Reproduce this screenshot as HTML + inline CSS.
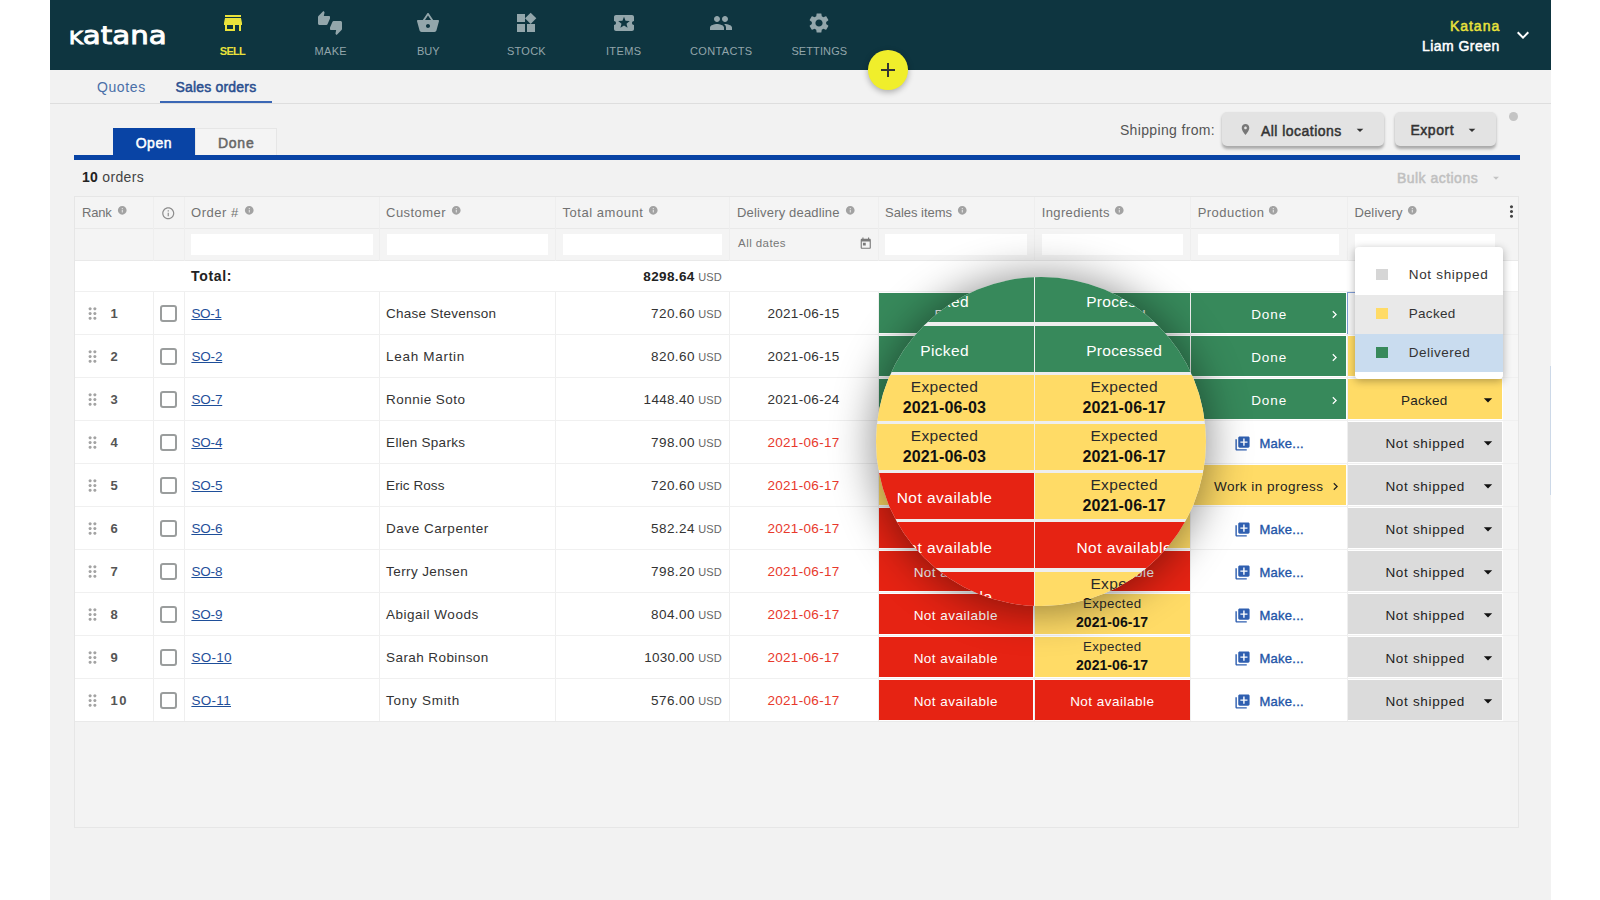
<!DOCTYPE html><html lang="en"><head><meta charset="utf-8"><title>Katana - Sales orders</title><style>
*{box-sizing:border-box;margin:0;padding:0}
html,body{width:1600px;height:900px;overflow:hidden;background:#fff}
body{font-family:"Liberation Sans",sans-serif;font-size:14px;color:#333;position:relative}
.abs,.ic,.t{position:absolute}
.t{white-space:nowrap;line-height:1}
.ic{display:block}
#app{position:absolute;left:50px;top:0;width:1501px;height:900px;background:#f2f2f2;overflow:hidden}
#hdr{position:absolute;left:50px;top:0;width:1501px;height:70px;background:#0e3540}
.hl{position:absolute;background:#e9e9e9}
.fin{position:absolute;top:234px;height:21px;background:#fff}
.row{position:absolute;left:75px;width:1443px;height:43px;background:#fff;border-top:1px solid #f0f0f0}
.cell{position:absolute;top:1px;height:40px}
.g{background:#37895b;color:#fff}
.y{background:#ffdb66;color:#222}
.r{background:#e62313;color:#fff}
.n{background:#dbdbdb;color:#222}
.cb{position:absolute;left:85px;top:13px;width:16.5px;height:16.5px;border:2px solid #9a9d9d;border-radius:3px;background:#fff}
.vl{position:absolute;top:0;width:1px;background:#efefef}
.mc{position:absolute}
#logo::first-letter{font-variant:small-caps;-webkit-text-stroke:1.5px #fff}
</style></head><body>
<div id="app"></div>
<div id="hdr"></div>
<div class="t" id="logo" style="left:69px;top:23px;font-family:'DejaVu Sans',sans-serif;font-weight:400;font-size:25px;color:#fff;letter-spacing:0px;-webkit-text-stroke:.9px #fff;transform-origin:0 0;transform:scaleX(1.17)">katana</div>
<svg class="ic" style="left:221px;top:11px;width:24px;height:24px;" viewBox="0 0 24 24"><path fill="#e9e23b" d="M20 4H4v2h16V4zm1 10v-2l-1-5H4l-1 5v2h1v6h10v-6h4v6h2v-6h1zm-9 4H6v-4h6v4z"/></svg>
<div class="t" style="left:219.8px;top:46.39px;font-size:11px;font-weight:700;color:#e9e23b;letter-spacing:-0.74px;">SELL</div>
<svg class="ic" style="left:318px;top:11px;width:24px;height:24px;" viewBox="0 0 24 24"><path fill="#93a6ab" d="M12 6c0-.55-.45-1-1-1H5.82l.66-3.18.02-.23c0-.31-.13-.59-.33-.8L5.38 0 .44 4.94C.17 5.21 0 5.59 0 6v6.5c0 .83.67 1.5 1.5 1.5h6.75c.62 0 1.15-.38 1.38-.91l2.26-5.29c.07-.17.11-.36.11-.55V6zm10.5 4h-6.75c-.62 0-1.15.38-1.38.91l-2.26 5.29c-.07.17-.11.36-.11.55V18c0 .55.45 1 1 1h5.18l-.66 3.18-.02.24c0 .31.13.59.33.8l.79.78 4.94-4.94c.27-.27.44-.65.44-1.06v-6.5c0-.83-.67-1.5-1.5-1.5z"/></svg>
<div class="t" style="left:314.4px;top:46.39px;font-size:11px;color:#93a6ab;letter-spacing:0.37px;">MAKE</div>
<svg class="ic" style="left:416px;top:11px;width:24px;height:24px;" viewBox="0 0 24 24"><path fill="#93a6ab" d="M17.21 9l-4.38-6.56c-.19-.28-.51-.42-.83-.42-.32 0-.64.14-.83.43L6.79 9H2c-.55 0-1 .45-1 1 0 .09.01.18.04.27l2.54 9.27c.23.84 1 1.46 1.92 1.46h13c.92 0 1.69-.62 1.93-1.46l2.54-9.27L23 10c0-.55-.45-1-1-1h-4.79zM9 9l3-4.4L15 9H9zm3 8c-1.1 0-2-.9-2-2s.9-2 2-2 2 .9 2 2-.9 2-2 2z"/></svg>
<div class="t" style="left:416.9px;top:46.39px;font-size:11px;color:#93a6ab;letter-spacing:0.09px;">BUY</div>
<svg class="ic" style="left:514px;top:11px;width:24px;height:24px;" viewBox="0 0 24 24"><path fill="#93a6ab" d="M13 13v8h8v-8h-8zM3 21h8v-8H3v8zM3 3v8h8V3H3zm13.66-1.31L11 7.34 16.66 13l5.66-5.66-5.66-5.65z"/></svg>
<div class="t" style="left:506.9px;top:46.39px;font-size:11px;color:#93a6ab;letter-spacing:0.28px;">STOCK</div>
<svg class="ic" style="left:612px;top:11px;width:24px;height:24px;" viewBox="0 0 24 24"><path fill="#93a6ab" d="M20 12c0-1.1.9-2 2-2V6c0-1.1-.9-2-2-2H4c-1.1 0-1.99.9-1.99 2v4c1.1 0 1.99.9 1.99 2s-.89 2-2 2v4c0 1.1.9 2 2 2h16c1.1 0 2-.9 2-2v-4c-1.1 0-2-.9-2-2zm-4.42 4.8L12 14.5l-3.58 2.3 1.08-4.12-3.29-2.69 4.24-.25L12 5.8l1.54 3.95 4.24.25-3.29 2.69 1.09 4.11z"/></svg>
<div class="t" style="left:605.9px;top:46.39px;font-size:11px;color:#93a6ab;letter-spacing:0.42px;">ITEMS</div>
<svg class="ic" style="left:709px;top:11px;width:24px;height:24px;" viewBox="0 0 24 24"><path fill="#93a6ab" d="M16 11c1.66 0 2.99-1.34 2.99-3S17.66 5 16 5c-1.66 0-3 1.34-3 3s1.34 3 3 3zm-8 0c1.66 0 2.99-1.34 2.99-3S9.66 5 8 5C6.34 5 5 6.34 5 8s1.34 3 3 3zm0 2c-2.33 0-7 1.17-7 3.5V19h14v-2.5c0-2.33-4.67-3.5-7-3.5zm8 0c-.29 0-.62.02-.97.05 1.16.84 1.97 1.97 1.97 3.45V19h6v-2.5c0-2.33-4.67-3.5-7-3.5z"/></svg>
<div class="t" style="left:689.9px;top:46.39px;font-size:11px;color:#93a6ab;letter-spacing:0.37px;">CONTACTS</div>
<svg class="ic" style="left:807px;top:11px;width:24px;height:24px;" viewBox="0 0 24 24"><path fill="#93a6ab" d="M19.14 12.94c.04-.3.06-.61.06-.94 0-.32-.02-.64-.07-.94l2.03-1.58c.18-.14.23-.41.12-.61l-1.92-3.32c-.12-.22-.37-.29-.59-.22l-2.39.96c-.5-.38-1.03-.7-1.62-.94l-.36-2.54c-.04-.24-.24-.41-.48-.41h-3.84c-.24 0-.43.17-.47.41l-.36 2.54c-.59.24-1.13.57-1.62.94l-2.39-.96c-.22-.08-.47 0-.59.22L2.74 8.87c-.12.21-.08.47.12.61l2.03 1.58c-.05.3-.09.63-.09.94s.02.64.07.94l-2.03 1.58c-.18.14-.23.41-.12.61l1.92 3.32c.12.22.37.29.59.22l2.39-.96c.5.38 1.03.7 1.62.94l.36 2.54c.05.24.24.41.48.41h3.84c.24 0 .44-.17.47-.41l.36-2.54c.59-.24 1.13-.56 1.62-.94l2.39.96c.22.08.47 0 .59-.22l1.92-3.32c.12-.22.07-.47-.12-.61l-2.01-1.58zM12 15.6c-1.98 0-3.6-1.62-3.6-3.6s1.62-3.6 3.6-3.6 3.6 1.62 3.6 3.6-1.62 3.6-3.6 3.6z"/></svg>
<div class="t" style="left:791.4px;top:46.39px;font-size:11px;color:#93a6ab;letter-spacing:0.11px;">SETTINGS</div>
<div class="t" style="left:1449.9px;top:19.15px;font-size:14px;color:#e9e23b;letter-spacing:0.99px;-webkit-text-stroke:.5px #e9e23b;">Katana</div>
<div class="t" style="left:1421.9px;top:39.45px;font-size:14px;color:#fff;letter-spacing:0.46px;-webkit-text-stroke:.5px #fff;">Liam Green</div>
<svg class="ic" style="left:1511.2px;top:23.3px;width:24px;height:24px;" viewBox="0 0 24 24"><path fill="#fff" d="M16.590 8.590L12 13.170 7.410 8.590 6 10l6 6 6-6z"/></svg>
<div class="abs" style="left:868px;top:50px;width:39.5px;height:39.5px;border-radius:50%;background:#f0ee2b;box-shadow:0 2px 6px rgba(0,0,0,.3)"></div>
<div class="abs" style="left:881px;top:69.2px;width:13.5px;height:1.7px;background:#333"></div><div class="abs" style="left:886.9px;top:63.3px;width:1.7px;height:13.5px;background:#333"></div>
<div class="hl" style="left:50px;top:103px;width:1501px;height:1px;background:#dedede"></div>
<div class="t" style="left:96.9px;top:79.65px;font-size:14px;color:#4a6fa8;letter-spacing:0.63px;">Quotes</div>
<div class="t" style="left:175.4px;top:79.65px;font-size:14px;color:#2a4f8f;letter-spacing:0.2px;-webkit-text-stroke:.5px #2a4f8f;">Sales orders</div>
<div class="abs" style="left:160px;top:101px;width:112px;height:2px;background:#3b67b5"></div>
<div class="abs" style="left:195px;top:128px;width:82px;height:28px;background:#f4f4f4;border:1px solid #e6e6e6;border-bottom:0"></div>
<div class="abs" style="left:113px;top:128px;width:82px;height:28px;background:#0944a5"></div>
<div class="t" style="left:135.7px;top:136.05px;font-size:14px;color:#fff;letter-spacing:0.52px;-webkit-text-stroke:.5px #fff;">Open</div>
<div class="t" style="left:217.9px;top:136.05px;font-size:14px;color:#666;letter-spacing:0.78px;-webkit-text-stroke:.5px #666;">Done</div>
<div class="abs" style="left:74px;top:154.5px;width:1446px;height:5px;background:#0944a5"></div>
<div class="t" style="left:1119.9px;top:123.35px;font-size:14px;color:#555;letter-spacing:0.35px;">Shipping from:</div>
<div class="abs" style="left:1222px;top:112px;width:162px;height:34px;background:#e3e3e3;border-radius:5px;box-shadow:0 2.5px 3px rgba(0,0,0,.3)"></div>
<svg class="ic" style="left:1239px;top:123px;width:13px;height:13px;" viewBox="0 0 24 24"><path fill="#777" d="M12 2C8.130 2 5 5.130 5 9c0 5.250 7 13 7 13s7-7.750 7-13c0-3.870-3.130-7-7-7zm0 9.500c-1.380 0-2.500-1.120-2.500-2.500s1.120-2.500 2.500-2.500 2.500 1.120 2.500 2.500-1.120 2.500-2.500 2.500z"/></svg>
<div class="t" style="left:1260.9px;top:123.65px;font-size:14px;color:#333;letter-spacing:0.47px;-webkit-text-stroke:.5px #333;">All locations</div>
<svg class="ic" style="left:1352px;top:122px;width:16px;height:16px;" viewBox="0 0 24 24"><path fill="#333" d="M7 10l5 5 5-5z"/></svg>
<div class="abs" style="left:1395px;top:112px;width:101px;height:34px;background:#e3e3e3;border-radius:5px;box-shadow:0 2.5px 3px rgba(0,0,0,.3)"></div>
<div class="t" style="left:1410.4px;top:122.95px;font-size:14px;color:#333;letter-spacing:0.57px;-webkit-text-stroke:.5px #333;">Export</div>
<svg class="ic" style="left:1464px;top:122px;width:16px;height:16px;" viewBox="0 0 24 24"><path fill="#333" d="M7 10l5 5 5-5z"/></svg>
<div class="abs" style="left:1509px;top:112px;width:9px;height:9px;border-radius:50%;background:#c4c4c4"></div>
<div class="t" style="left:81.9px;top:170.15px;font-size:14px;color:#444;letter-spacing:0.33px;"><b style="color:#222">10</b> orders</div>
<div class="t" style="left:1396.9px;top:170.65px;font-size:14px;color:#c0c0c0;letter-spacing:0.48px;-webkit-text-stroke:.5px #c0c0c0;">Bulk actions</div>
<svg class="ic" style="left:1489px;top:171px;width:14px;height:14px;" viewBox="0 0 24 24"><path fill="#c4c4c4" d="M7 10l5 5 5-5z"/></svg>
<div class="abs" style="left:74px;top:196px;width:1445px;height:632px;border:1px solid #e6e6e6;background:#f3f3f3"></div>
<div class="abs" style="left:75px;top:197px;width:1443px;height:64px;background:#f4f4f4"></div>
<div class="hl" style="left:75px;top:228px;width:1443px;height:1px"></div>
<div class="hl" style="left:75px;top:260px;width:1443px;height:1px"></div>
<div class="vl" style="left:153px;top:197px;height:64px;background:#eeeeee"></div>
<div class="vl" style="left:184px;top:197px;height:64px;background:#eeeeee"></div>
<div class="vl" style="left:379px;top:197px;height:64px;background:#eeeeee"></div>
<div class="vl" style="left:555px;top:197px;height:64px;background:#eeeeee"></div>
<div class="vl" style="left:729px;top:197px;height:64px;background:#eeeeee"></div>
<div class="vl" style="left:878px;top:197px;height:64px;background:#eeeeee"></div>
<div class="vl" style="left:1034px;top:197px;height:64px;background:#eeeeee"></div>
<div class="vl" style="left:1190px;top:197px;height:64px;background:#eeeeee"></div>
<div class="vl" style="left:1347px;top:197px;height:64px;background:#eeeeee"></div>
<div class="t" style="left:82px;top:206px;font-size:13px;color:#727272;letter-spacing:-0.18px;">Rank</div>
<svg class="ic" style="left:117.0px;top:204.5px;width:10.5px;height:10.5px;" viewBox="0 0 24 24"><path fill="#a2a2a2" d="M12 2C6.48 2 2 6.48 2 12s4.480 10 10 10 10-4.480 10-10S17.520 2 12 2zm1 15h-2v-6h2v6zm0-8h-2V7h2v2z"/></svg>
<div class="t" style="left:191.1px;top:206px;font-size:13px;color:#727272;letter-spacing:0.5px;">Order #</div>
<svg class="ic" style="left:243.5px;top:204.5px;width:10.5px;height:10.5px;" viewBox="0 0 24 24"><path fill="#a2a2a2" d="M12 2C6.48 2 2 6.48 2 12s4.480 10 10 10 10-4.480 10-10S17.520 2 12 2zm1 15h-2v-6h2v6zm0-8h-2V7h2v2z"/></svg>
<div class="t" style="left:386.1px;top:206px;font-size:13px;color:#727272;letter-spacing:0.44px;">Customer</div>
<svg class="ic" style="left:450.5px;top:204.5px;width:10.5px;height:10.5px;" viewBox="0 0 24 24"><path fill="#a2a2a2" d="M12 2C6.48 2 2 6.48 2 12s4.480 10 10 10 10-4.480 10-10S17.520 2 12 2zm1 15h-2v-6h2v6zm0-8h-2V7h2v2z"/></svg>
<div class="t" style="left:562.4px;top:206px;font-size:13px;color:#727272;letter-spacing:0.55px;">Total amount</div>
<svg class="ic" style="left:647.5px;top:204.5px;width:10.5px;height:10.5px;" viewBox="0 0 24 24"><path fill="#a2a2a2" d="M12 2C6.48 2 2 6.48 2 12s4.480 10 10 10 10-4.480 10-10S17.520 2 12 2zm1 15h-2v-6h2v6zm0-8h-2V7h2v2z"/></svg>
<div class="t" style="left:737px;top:206px;font-size:13px;color:#727272;letter-spacing:0.17px;">Delivery deadline</div>
<svg class="ic" style="left:844.5px;top:204.5px;width:10.5px;height:10.5px;" viewBox="0 0 24 24"><path fill="#a2a2a2" d="M12 2C6.48 2 2 6.48 2 12s4.480 10 10 10 10-4.480 10-10S17.520 2 12 2zm1 15h-2v-6h2v6zm0-8h-2V7h2v2z"/></svg>
<div class="t" style="left:885.1px;top:206px;font-size:13px;color:#727272;letter-spacing:-0.03px;">Sales items</div>
<svg class="ic" style="left:956.5px;top:204.5px;width:10.5px;height:10.5px;" viewBox="0 0 24 24"><path fill="#a2a2a2" d="M12 2C6.48 2 2 6.48 2 12s4.480 10 10 10 10-4.480 10-10S17.520 2 12 2zm1 15h-2v-6h2v6zm0-8h-2V7h2v2z"/></svg>
<div class="t" style="left:1041.8px;top:206px;font-size:13px;color:#727272;letter-spacing:0.34px;">Ingredients</div>
<svg class="ic" style="left:1113.9px;top:204.5px;width:10.5px;height:10.5px;" viewBox="0 0 24 24"><path fill="#a2a2a2" d="M12 2C6.48 2 2 6.48 2 12s4.480 10 10 10 10-4.480 10-10S17.520 2 12 2zm1 15h-2v-6h2v6zm0-8h-2V7h2v2z"/></svg>
<div class="t" style="left:1197.7px;top:206px;font-size:13px;color:#727272;letter-spacing:0.46px;">Production</div>
<svg class="ic" style="left:1268.3px;top:204.5px;width:10.5px;height:10.5px;" viewBox="0 0 24 24"><path fill="#a2a2a2" d="M12 2C6.48 2 2 6.48 2 12s4.480 10 10 10 10-4.480 10-10S17.520 2 12 2zm1 15h-2v-6h2v6zm0-8h-2V7h2v2z"/></svg>
<div class="t" style="left:1354.4px;top:206px;font-size:13px;color:#727272;letter-spacing:0.18px;">Delivery</div>
<svg class="ic" style="left:1407.1px;top:204.5px;width:10.5px;height:10.5px;" viewBox="0 0 24 24"><path fill="#a2a2a2" d="M12 2C6.48 2 2 6.48 2 12s4.480 10 10 10 10-4.480 10-10S17.520 2 12 2zm1 15h-2v-6h2v6zm0-8h-2V7h2v2z"/></svg>
<svg class="ic" style="left:161px;top:205.5px;width:14.5px;height:14.5px;" viewBox="0 0 24 24"><path fill="#8c8c8c" d="M11 7h2v2h-2zm0 4h2v6h-2zm1-9C6.48 2 2 6.48 2 12s4.480 10 10 10 10-4.480 10-10S17.520 2 12 2zm0 18c-4.410 0-8-3.590-8-8s3.590-8 8-8 8 3.590 8 8-3.590 8-8 8z"/></svg>
<svg class="ic" style="left:1501.5px;top:202px;width:19px;height:19px;" viewBox="0 0 24 24"><path fill="#444" d="M12 8c1.100 0 2-.9 2-2s-.9-2-2-2-2 .9-2 2 .9 2 2 2zm0 2c-1.100 0-2 .9-2 2s.9 2 2 2 2-.9 2-2-.9-2-2-2zm0 6c-1.100 0-2 .9-2 2s.9 2 2 2 2-.9 2-2-.9-2-2-2z"/></svg>
<div class="fin" style="left:191px;width:182px"></div>
<div class="fin" style="left:387px;width:161px"></div>
<div class="fin" style="left:563px;width:159px"></div>
<div class="fin" style="left:885px;width:142px"></div>
<div class="fin" style="left:1042px;width:141px"></div>
<div class="fin" style="left:1198px;width:141px"></div>
<div class="fin" style="left:1355px;width:140px"></div>
<div class="t" style="left:738.1px;top:237.67px;font-size:11.5px;color:#777;letter-spacing:0.42px;">All dates</div>
<svg class="ic" style="left:859px;top:236.5px;width:13.5px;height:13.5px;" viewBox="0 0 24 24"><path fill="#7a7a7a" d="M19 3h-1V1h-2v2H8V1H6v2H5c-1.110 0-1.990.9-1.990 2L3 19c0 1.100.890 2 2 2h14c1.100 0 2-.9 2-2V5c0-1.100-.9-2-2-2zm0 16H5V8h14v11zM7 10h5v5H7z"/></svg>
<div class="abs" style="left:75px;top:261px;width:1443px;height:30px;background:#fff"></div>
<div class="t" style="left:191.1px;top:269.15px;font-size:14px;font-weight:700;color:#222;letter-spacing:0.65px;">Total:</div>
<div class="t" style="left:643.3px;top:269.57px;font-size:13.5px;font-weight:700;color:#222;letter-spacing:0.38px;">8298.64</div>
<div class="t" style="left:698.2px;top:271.69px;font-size:11px;color:#666;letter-spacing:0.19px;">USD</div>
<div class="row" style="top:291px">
<div class="vl" style="left:78px;height:42px"></div>
<div class="vl" style="left:109px;height:42px"></div>
<div class="vl" style="left:304px;height:42px"></div>
<div class="vl" style="left:480px;height:42px"></div>
<div class="vl" style="left:654px;height:42px"></div>
<div class="vl" style="left:803px;height:42px"></div>
<div class="vl" style="left:959px;height:42px"></div>
<div class="vl" style="left:1115px;height:42px"></div>
<div class="vl" style="left:1272px;height:42px"></div>
<div class="abs" style="left:1428px;top:0;width:15px;height:42px;background:#f6f6f6"></div>
<svg class="ic" style="left:8px;top:11.5px;width:19px;height:19px;" viewBox="0 0 24 24"><path fill="#a3a3a3" d="M11 18c0 1.100-.9 2-2 2s-2-.9-2-2 .9-2 2-2 2 .9 2 2zm-2-8c-1.100 0-2 .9-2 2s.9 2 2 2 2-.9 2-2-.9-2-2-2zm0-6c-1.100 0-2 .9-2 2s.9 2 2 2 2-.9 2-2-.9-2-2-2zm6 4c1.100 0 2-.9 2-2s-.9-2-2-2-2 .9-2 2 .9 2 2 2zm0 2c-1.100 0-2 .9-2 2s.9 2 2 2 2-.9 2-2-.9-2-2-2zm0 6c-1.100 0-2 .9-2 2s.9 2 2 2 2-.9 2-2-.9-2-2-2z"/></svg>
<div class="t" style="left:35.4px;top:15.4px;font-size:13px;font-weight:700;color:#555;letter-spacing:-1.13px;">1</div>
<div class="cb"></div>
<div class="t" style="left:116.4px;top:14.97px;font-size:13.5px;color:#1f4f9a;letter-spacing:-0.34px;text-decoration:underline">SO-1</div>
<div class="t" style="left:311.1px;top:14.97px;font-size:13.5px;color:#333;letter-spacing:0.24px;">Chase Stevenson</div>
<div class="t" style="left:576.1px;top:14.97px;font-size:13.5px;color:#333;letter-spacing:0.4px;">720.60</div>
<div class="t" style="left:623.2px;top:17.09px;font-size:11px;color:#666;letter-spacing:0.19px;">USD</div>
<div class="t" style="left:692.4px;top:14.97px;font-size:13.5px;color:#333;letter-spacing:0.32px;">2021-06-15</div>
<div class="cell g" style="left:804px;width:154px"></div><div class="t" style="left:859.4px;top:15.57px;font-size:13.5px;color:#fff;letter-spacing:0.36px;">Picked</div>
<div class="cell g" style="left:960px;width:155px"></div><div class="t" style="left:1003.65px;top:15.57px;font-size:13.5px;color:#fff;letter-spacing:0.38px;">Processed</div>
<div class="cell g" style="left:1116px;width:155px"></div>
<div class="t" style="left:1176.2px;top:15.57px;font-size:13.5px;color:#fff;letter-spacing:0.91px;">Done</div>
<svg class="ic" style="left:1252px;top:14.5px;width:15px;height:15px;" viewBox="0 0 24 24"><path fill="#fff" d="M10 6L8.590 7.410 13.170 12l-4.580 4.590L10 18l6-6z"/></svg>
<div class="cell" style="left:1272px;top:0;height:43px;width:156px;border:1.5px solid #7f9cd6;background:#f6f6f6"></div>
</div>
<div class="row" style="top:334px">
<div class="vl" style="left:78px;height:42px"></div>
<div class="vl" style="left:109px;height:42px"></div>
<div class="vl" style="left:304px;height:42px"></div>
<div class="vl" style="left:480px;height:42px"></div>
<div class="vl" style="left:654px;height:42px"></div>
<div class="vl" style="left:803px;height:42px"></div>
<div class="vl" style="left:959px;height:42px"></div>
<div class="vl" style="left:1115px;height:42px"></div>
<div class="vl" style="left:1272px;height:42px"></div>
<div class="abs" style="left:1428px;top:0;width:15px;height:42px;background:#f6f6f6"></div>
<svg class="ic" style="left:8px;top:11.5px;width:19px;height:19px;" viewBox="0 0 24 24"><path fill="#a3a3a3" d="M11 18c0 1.100-.9 2-2 2s-2-.9-2-2 .9-2 2-2 2 .9 2 2zm-2-8c-1.100 0-2 .9-2 2s.9 2 2 2 2-.9 2-2-.9-2-2-2zm0-6c-1.100 0-2 .9-2 2s.9 2 2 2 2-.9 2-2-.9-2-2-2zm6 4c1.100 0 2-.9 2-2s-.9-2-2-2-2 .9-2 2 .9 2 2 2zm0 2c-1.100 0-2 .9-2 2s.9 2 2 2 2-.9 2-2-.9-2-2-2zm0 6c-1.100 0-2 .9-2 2s.9 2 2 2 2-.9 2-2-.9-2-2-2z"/></svg>
<div class="t" style="left:35.4px;top:15.4px;font-size:13px;font-weight:700;color:#555;letter-spacing:-1.13px;">2</div>
<div class="cb"></div>
<div class="t" style="left:116.4px;top:14.97px;font-size:13.5px;color:#1f4f9a;letter-spacing:-0.17px;text-decoration:underline">SO-2</div>
<div class="t" style="left:311.1px;top:14.97px;font-size:13.5px;color:#333;letter-spacing:0.69px;">Leah Martin</div>
<div class="t" style="left:576.1px;top:14.97px;font-size:13.5px;color:#333;letter-spacing:0.4px;">820.60</div>
<div class="t" style="left:623.2px;top:17.09px;font-size:11px;color:#666;letter-spacing:0.19px;">USD</div>
<div class="t" style="left:692.4px;top:14.97px;font-size:13.5px;color:#333;letter-spacing:0.32px;">2021-06-15</div>
<div class="cell g" style="left:804px;width:154px"></div><div class="t" style="left:859.4px;top:15.57px;font-size:13.5px;color:#fff;letter-spacing:0.36px;">Picked</div>
<div class="cell g" style="left:960px;width:155px"></div><div class="t" style="left:1003.65px;top:15.57px;font-size:13.5px;color:#fff;letter-spacing:0.38px;">Processed</div>
<div class="cell g" style="left:1116px;width:155px"></div>
<div class="t" style="left:1176.2px;top:15.57px;font-size:13.5px;color:#fff;letter-spacing:0.91px;">Done</div>
<svg class="ic" style="left:1252px;top:14.5px;width:15px;height:15px;" viewBox="0 0 24 24"><path fill="#fff" d="M10 6L8.590 7.410 13.170 12l-4.580 4.590L10 18l6-6z"/></svg>
<div class="cell y" style="left:1273px;width:154px"></div>
</div>
<div class="row" style="top:377px">
<div class="vl" style="left:78px;height:42px"></div>
<div class="vl" style="left:109px;height:42px"></div>
<div class="vl" style="left:304px;height:42px"></div>
<div class="vl" style="left:480px;height:42px"></div>
<div class="vl" style="left:654px;height:42px"></div>
<div class="vl" style="left:803px;height:42px"></div>
<div class="vl" style="left:959px;height:42px"></div>
<div class="vl" style="left:1115px;height:42px"></div>
<div class="vl" style="left:1272px;height:42px"></div>
<div class="abs" style="left:1428px;top:0;width:15px;height:42px;background:#f6f6f6"></div>
<svg class="ic" style="left:8px;top:11.5px;width:19px;height:19px;" viewBox="0 0 24 24"><path fill="#a3a3a3" d="M11 18c0 1.100-.9 2-2 2s-2-.9-2-2 .9-2 2-2 2 .9 2 2zm-2-8c-1.100 0-2 .9-2 2s.9 2 2 2 2-.9 2-2-.9-2-2-2zm0-6c-1.100 0-2 .9-2 2s.9 2 2 2 2-.9 2-2-.9-2-2-2zm6 4c1.100 0 2-.9 2-2s-.9-2-2-2-2 .9-2 2 .9 2 2 2zm0 2c-1.100 0-2 .9-2 2s.9 2 2 2 2-.9 2-2-.9-2-2-2zm0 6c-1.100 0-2 .9-2 2s.9 2 2 2 2-.9 2-2-.9-2-2-2z"/></svg>
<div class="t" style="left:35.4px;top:15.4px;font-size:13px;font-weight:700;color:#555;letter-spacing:-1.13px;">3</div>
<div class="cb"></div>
<div class="t" style="left:116.4px;top:14.97px;font-size:13.5px;color:#1f4f9a;letter-spacing:-0.17px;text-decoration:underline">SO-7</div>
<div class="t" style="left:311.1px;top:14.97px;font-size:13.5px;color:#333;letter-spacing:0.46px;">Ronnie Soto</div>
<div class="t" style="left:568.6px;top:14.97px;font-size:13.5px;color:#333;letter-spacing:0.33px;">1448.40</div>
<div class="t" style="left:623.2px;top:17.09px;font-size:11px;color:#666;letter-spacing:0.19px;">USD</div>
<div class="t" style="left:692.4px;top:14.97px;font-size:13.5px;color:#333;letter-spacing:0.32px;">2021-06-24</div>
<div class="cell g" style="left:804px;width:154px"></div><div class="t" style="left:859.4px;top:15.57px;font-size:13.5px;color:#fff;letter-spacing:0.36px;">Picked</div>
<div class="cell g" style="left:960px;width:155px"></div><div class="t" style="left:1003.65px;top:15.57px;font-size:13.5px;color:#fff;letter-spacing:0.38px;">Processed</div>
<div class="cell g" style="left:1116px;width:155px"></div>
<div class="t" style="left:1176.2px;top:15.57px;font-size:13.5px;color:#fff;letter-spacing:0.91px;">Done</div>
<svg class="ic" style="left:1252px;top:14.5px;width:15px;height:15px;" viewBox="0 0 24 24"><path fill="#fff" d="M10 6L8.590 7.410 13.170 12l-4.580 4.590L10 18l6-6z"/></svg>
<div class="cell y" style="left:1273px;width:154px"></div>
<div class="t" style="left:1326.1px;top:15.57px;font-size:13.5px;color:#222;letter-spacing:0.25px;">Packed</div>
<svg class="ic" style="left:1403px;top:11.8px;width:20px;height:20px;" viewBox="0 0 24 24"><path fill="#111" d="M7 10l5 5 5-5z"/></svg>
</div>
<div class="row" style="top:420px">
<div class="vl" style="left:78px;height:42px"></div>
<div class="vl" style="left:109px;height:42px"></div>
<div class="vl" style="left:304px;height:42px"></div>
<div class="vl" style="left:480px;height:42px"></div>
<div class="vl" style="left:654px;height:42px"></div>
<div class="vl" style="left:803px;height:42px"></div>
<div class="vl" style="left:959px;height:42px"></div>
<div class="vl" style="left:1115px;height:42px"></div>
<div class="vl" style="left:1272px;height:42px"></div>
<div class="abs" style="left:1428px;top:0;width:15px;height:42px;background:#f6f6f6"></div>
<svg class="ic" style="left:8px;top:11.5px;width:19px;height:19px;" viewBox="0 0 24 24"><path fill="#a3a3a3" d="M11 18c0 1.100-.9 2-2 2s-2-.9-2-2 .9-2 2-2 2 .9 2 2zm-2-8c-1.100 0-2 .9-2 2s.9 2 2 2 2-.9 2-2-.9-2-2-2zm0-6c-1.100 0-2 .9-2 2s.9 2 2 2 2-.9 2-2-.9-2-2-2zm6 4c1.100 0 2-.9 2-2s-.9-2-2-2-2 .9-2 2 .9 2 2 2zm0 2c-1.100 0-2 .9-2 2s.9 2 2 2 2-.9 2-2-.9-2-2-2zm0 6c-1.100 0-2 .9-2 2s.9 2 2 2 2-.9 2-2-.9-2-2-2z"/></svg>
<div class="t" style="left:35.4px;top:15.4px;font-size:13px;font-weight:700;color:#555;letter-spacing:-1.13px;">4</div>
<div class="cb"></div>
<div class="t" style="left:116.4px;top:14.97px;font-size:13.5px;color:#1f4f9a;letter-spacing:-0.17px;text-decoration:underline">SO-4</div>
<div class="t" style="left:311.1px;top:14.97px;font-size:13.5px;color:#333;letter-spacing:0.28px;">Ellen Sparks</div>
<div class="t" style="left:576.1px;top:14.97px;font-size:13.5px;color:#333;letter-spacing:0.4px;">798.00</div>
<div class="t" style="left:623.2px;top:17.09px;font-size:11px;color:#666;letter-spacing:0.19px;">USD</div>
<div class="t" style="left:692.4px;top:14.97px;font-size:13.5px;color:#e8392c;letter-spacing:0.32px;">2021-06-17</div>
<div class="cell y" style="left:804px;width:154px"></div><div class="t" style="left:851.5px;top:3.94px;font-size:13.3px;color:#2a2a2a;letter-spacing:0.38px;">Expected</div><div class="t" style="left:844.5px;top:22.45px;font-size:14px;font-weight:700;color:#111;letter-spacing:0.05px;">2021-06-03</div>
<div class="cell y" style="left:960px;width:155px"></div><div class="t" style="left:1008px;top:3.94px;font-size:13.3px;color:#2a2a2a;letter-spacing:0.38px;">Expected</div><div class="t" style="left:1001px;top:22.45px;font-size:14px;font-weight:700;color:#111;letter-spacing:0.05px;">2021-06-17</div>
<svg class="ic" style="left:1158.5px;top:13.5px;width:17px;height:17px;" viewBox="0 0 24 24"><path fill="#2f5fb0" d="M4 6H2v14c0 1.100.9 2 2 2h14v-2H4V6zm16-4H8c-1.100 0-2 .9-2 2v12c0 1.100.9 2 2 2h12c1.100 0 2-.9 2-2V4c0-1.100-.9-2-2-2zm-1 9h-4v4h-2v-4H9V9h4V5h2v4h4v2z"/></svg>
<div class="t" style="left:1184.4px;top:16px;font-size:13px;color:#2355a8;letter-spacing:0.28px;-webkit-text-stroke:.35px #2355a8">Make...</div>
<div class="cell n" style="left:1273px;width:154px"></div>
<div class="t" style="left:1310.4px;top:15.57px;font-size:13.5px;color:#222;letter-spacing:0.69px;">Not shipped</div>
<svg class="ic" style="left:1403px;top:11.8px;width:20px;height:20px;" viewBox="0 0 24 24"><path fill="#111" d="M7 10l5 5 5-5z"/></svg>
</div>
<div class="row" style="top:463px">
<div class="vl" style="left:78px;height:42px"></div>
<div class="vl" style="left:109px;height:42px"></div>
<div class="vl" style="left:304px;height:42px"></div>
<div class="vl" style="left:480px;height:42px"></div>
<div class="vl" style="left:654px;height:42px"></div>
<div class="vl" style="left:803px;height:42px"></div>
<div class="vl" style="left:959px;height:42px"></div>
<div class="vl" style="left:1115px;height:42px"></div>
<div class="vl" style="left:1272px;height:42px"></div>
<div class="abs" style="left:1428px;top:0;width:15px;height:42px;background:#f6f6f6"></div>
<svg class="ic" style="left:8px;top:11.5px;width:19px;height:19px;" viewBox="0 0 24 24"><path fill="#a3a3a3" d="M11 18c0 1.100-.9 2-2 2s-2-.9-2-2 .9-2 2-2 2 .9 2 2zm-2-8c-1.100 0-2 .9-2 2s.9 2 2 2 2-.9 2-2-.9-2-2-2zm0-6c-1.100 0-2 .9-2 2s.9 2 2 2 2-.9 2-2-.9-2-2-2zm6 4c1.100 0 2-.9 2-2s-.9-2-2-2-2 .9-2 2 .9 2 2 2zm0 2c-1.100 0-2 .9-2 2s.9 2 2 2 2-.9 2-2-.9-2-2-2zm0 6c-1.100 0-2 .9-2 2s.9 2 2 2 2-.9 2-2-.9-2-2-2z"/></svg>
<div class="t" style="left:35.4px;top:15.4px;font-size:13px;font-weight:700;color:#555;letter-spacing:-1.13px;">5</div>
<div class="cb"></div>
<div class="t" style="left:116.4px;top:14.97px;font-size:13.5px;color:#1f4f9a;letter-spacing:-0.17px;text-decoration:underline">SO-5</div>
<div class="t" style="left:311.1px;top:14.97px;font-size:13.5px;color:#333;letter-spacing:0.07px;">Eric Ross</div>
<div class="t" style="left:576.1px;top:14.97px;font-size:13.5px;color:#333;letter-spacing:0.4px;">720.60</div>
<div class="t" style="left:623.2px;top:17.09px;font-size:11px;color:#666;letter-spacing:0.19px;">USD</div>
<div class="t" style="left:692.4px;top:14.97px;font-size:13.5px;color:#e8392c;letter-spacing:0.32px;">2021-06-17</div>
<div class="cell y" style="left:804px;width:154px"></div><div class="t" style="left:851.5px;top:3.94px;font-size:13.3px;color:#2a2a2a;letter-spacing:0.38px;">Expected</div><div class="t" style="left:844.5px;top:22.45px;font-size:14px;font-weight:700;color:#111;letter-spacing:0.05px;">2021-06-03</div>
<div class="cell y" style="left:960px;width:155px"></div><div class="t" style="left:1008px;top:3.94px;font-size:13.3px;color:#2a2a2a;letter-spacing:0.38px;">Expected</div><div class="t" style="left:1001px;top:22.45px;font-size:14px;font-weight:700;color:#111;letter-spacing:0.05px;">2021-06-17</div>
<div class="cell y" style="left:1116px;width:155px"></div>
<div class="t" style="left:1138.9px;top:15.57px;font-size:13.5px;color:#222;letter-spacing:0.49px;">Work in progress</div>
<svg class="ic" style="left:1253px;top:14.5px;width:15px;height:15px;" viewBox="0 0 24 24"><path fill="#222" d="M10 6L8.590 7.410 13.170 12l-4.580 4.590L10 18l6-6z"/></svg>
<div class="cell n" style="left:1273px;width:154px"></div>
<div class="t" style="left:1310.4px;top:15.57px;font-size:13.5px;color:#222;letter-spacing:0.69px;">Not shipped</div>
<svg class="ic" style="left:1403px;top:11.8px;width:20px;height:20px;" viewBox="0 0 24 24"><path fill="#111" d="M7 10l5 5 5-5z"/></svg>
</div>
<div class="row" style="top:506px">
<div class="vl" style="left:78px;height:42px"></div>
<div class="vl" style="left:109px;height:42px"></div>
<div class="vl" style="left:304px;height:42px"></div>
<div class="vl" style="left:480px;height:42px"></div>
<div class="vl" style="left:654px;height:42px"></div>
<div class="vl" style="left:803px;height:42px"></div>
<div class="vl" style="left:959px;height:42px"></div>
<div class="vl" style="left:1115px;height:42px"></div>
<div class="vl" style="left:1272px;height:42px"></div>
<div class="abs" style="left:1428px;top:0;width:15px;height:42px;background:#f6f6f6"></div>
<svg class="ic" style="left:8px;top:11.5px;width:19px;height:19px;" viewBox="0 0 24 24"><path fill="#a3a3a3" d="M11 18c0 1.100-.9 2-2 2s-2-.9-2-2 .9-2 2-2 2 .9 2 2zm-2-8c-1.100 0-2 .9-2 2s.9 2 2 2 2-.9 2-2-.9-2-2-2zm0-6c-1.100 0-2 .9-2 2s.9 2 2 2 2-.9 2-2-.9-2-2-2zm6 4c1.100 0 2-.9 2-2s-.9-2-2-2-2 .9-2 2 .9 2 2 2zm0 2c-1.100 0-2 .9-2 2s.9 2 2 2 2-.9 2-2-.9-2-2-2zm0 6c-1.100 0-2 .9-2 2s.9 2 2 2 2-.9 2-2-.9-2-2-2z"/></svg>
<div class="t" style="left:35.4px;top:15.4px;font-size:13px;font-weight:700;color:#555;letter-spacing:-1.13px;">6</div>
<div class="cb"></div>
<div class="t" style="left:116.4px;top:14.97px;font-size:13.5px;color:#1f4f9a;letter-spacing:-0.17px;text-decoration:underline">SO-6</div>
<div class="t" style="left:311.1px;top:14.97px;font-size:13.5px;color:#333;letter-spacing:0.53px;">Dave Carpenter</div>
<div class="t" style="left:576.1px;top:14.97px;font-size:13.5px;color:#333;letter-spacing:0.4px;">582.24</div>
<div class="t" style="left:623.2px;top:17.09px;font-size:11px;color:#666;letter-spacing:0.19px;">USD</div>
<div class="t" style="left:692.4px;top:14.97px;font-size:13.5px;color:#e8392c;letter-spacing:0.32px;">2021-06-17</div>
<div class="cell r" style="left:804px;width:154px"></div><div class="t" style="left:838.65px;top:15.57px;font-size:13.5px;color:#fff;letter-spacing:0.48px;">Not available</div>
<div class="cell y" style="left:960px;width:155px"></div><div class="t" style="left:1008px;top:3.94px;font-size:13.3px;color:#2a2a2a;letter-spacing:0.38px;">Expected</div><div class="t" style="left:1001px;top:22.45px;font-size:14px;font-weight:700;color:#111;letter-spacing:0.05px;">2021-06-17</div>
<svg class="ic" style="left:1158.5px;top:13.5px;width:17px;height:17px;" viewBox="0 0 24 24"><path fill="#2f5fb0" d="M4 6H2v14c0 1.100.9 2 2 2h14v-2H4V6zm16-4H8c-1.100 0-2 .9-2 2v12c0 1.100.9 2 2 2h12c1.100 0 2-.9 2-2V4c0-1.100-.9-2-2-2zm-1 9h-4v4h-2v-4H9V9h4V5h2v4h4v2z"/></svg>
<div class="t" style="left:1184.4px;top:16px;font-size:13px;color:#2355a8;letter-spacing:0.28px;-webkit-text-stroke:.35px #2355a8">Make...</div>
<div class="cell n" style="left:1273px;width:154px"></div>
<div class="t" style="left:1310.4px;top:15.57px;font-size:13.5px;color:#222;letter-spacing:0.69px;">Not shipped</div>
<svg class="ic" style="left:1403px;top:11.8px;width:20px;height:20px;" viewBox="0 0 24 24"><path fill="#111" d="M7 10l5 5 5-5z"/></svg>
</div>
<div class="row" style="top:549px">
<div class="vl" style="left:78px;height:42px"></div>
<div class="vl" style="left:109px;height:42px"></div>
<div class="vl" style="left:304px;height:42px"></div>
<div class="vl" style="left:480px;height:42px"></div>
<div class="vl" style="left:654px;height:42px"></div>
<div class="vl" style="left:803px;height:42px"></div>
<div class="vl" style="left:959px;height:42px"></div>
<div class="vl" style="left:1115px;height:42px"></div>
<div class="vl" style="left:1272px;height:42px"></div>
<div class="abs" style="left:1428px;top:0;width:15px;height:42px;background:#f6f6f6"></div>
<svg class="ic" style="left:8px;top:11.5px;width:19px;height:19px;" viewBox="0 0 24 24"><path fill="#a3a3a3" d="M11 18c0 1.100-.9 2-2 2s-2-.9-2-2 .9-2 2-2 2 .9 2 2zm-2-8c-1.100 0-2 .9-2 2s.9 2 2 2 2-.9 2-2-.9-2-2-2zm0-6c-1.100 0-2 .9-2 2s.9 2 2 2 2-.9 2-2-.9-2-2-2zm6 4c1.100 0 2-.9 2-2s-.9-2-2-2-2 .9-2 2 .9 2 2 2zm0 2c-1.100 0-2 .9-2 2s.9 2 2 2 2-.9 2-2-.9-2-2-2zm0 6c-1.100 0-2 .9-2 2s.9 2 2 2 2-.9 2-2-.9-2-2-2z"/></svg>
<div class="t" style="left:35.4px;top:15.4px;font-size:13px;font-weight:700;color:#555;letter-spacing:-1.13px;">7</div>
<div class="cb"></div>
<div class="t" style="left:116.4px;top:14.97px;font-size:13.5px;color:#1f4f9a;letter-spacing:-0.17px;text-decoration:underline">SO-8</div>
<div class="t" style="left:311.1px;top:14.97px;font-size:13.5px;color:#333;letter-spacing:0.39px;">Terry Jensen</div>
<div class="t" style="left:576.1px;top:14.97px;font-size:13.5px;color:#333;letter-spacing:0.4px;">798.20</div>
<div class="t" style="left:623.2px;top:17.09px;font-size:11px;color:#666;letter-spacing:0.19px;">USD</div>
<div class="t" style="left:692.4px;top:14.97px;font-size:13.5px;color:#e8392c;letter-spacing:0.32px;">2021-06-17</div>
<div class="cell r" style="left:804px;width:154px"></div><div class="t" style="left:838.65px;top:15.57px;font-size:13.5px;color:#fff;letter-spacing:0.48px;">Not available</div>
<div class="cell r" style="left:960px;width:155px"></div><div class="t" style="left:995.15px;top:15.57px;font-size:13.5px;color:#fff;letter-spacing:0.48px;">Not available</div>
<svg class="ic" style="left:1158.5px;top:13.5px;width:17px;height:17px;" viewBox="0 0 24 24"><path fill="#2f5fb0" d="M4 6H2v14c0 1.100.9 2 2 2h14v-2H4V6zm16-4H8c-1.100 0-2 .9-2 2v12c0 1.100.9 2 2 2h12c1.100 0 2-.9 2-2V4c0-1.100-.9-2-2-2zm-1 9h-4v4h-2v-4H9V9h4V5h2v4h4v2z"/></svg>
<div class="t" style="left:1184.4px;top:16px;font-size:13px;color:#2355a8;letter-spacing:0.28px;-webkit-text-stroke:.35px #2355a8">Make...</div>
<div class="cell n" style="left:1273px;width:154px"></div>
<div class="t" style="left:1310.4px;top:15.57px;font-size:13.5px;color:#222;letter-spacing:0.69px;">Not shipped</div>
<svg class="ic" style="left:1403px;top:11.8px;width:20px;height:20px;" viewBox="0 0 24 24"><path fill="#111" d="M7 10l5 5 5-5z"/></svg>
</div>
<div class="row" style="top:592px">
<div class="vl" style="left:78px;height:42px"></div>
<div class="vl" style="left:109px;height:42px"></div>
<div class="vl" style="left:304px;height:42px"></div>
<div class="vl" style="left:480px;height:42px"></div>
<div class="vl" style="left:654px;height:42px"></div>
<div class="vl" style="left:803px;height:42px"></div>
<div class="vl" style="left:959px;height:42px"></div>
<div class="vl" style="left:1115px;height:42px"></div>
<div class="vl" style="left:1272px;height:42px"></div>
<div class="abs" style="left:1428px;top:0;width:15px;height:42px;background:#f6f6f6"></div>
<svg class="ic" style="left:8px;top:11.5px;width:19px;height:19px;" viewBox="0 0 24 24"><path fill="#a3a3a3" d="M11 18c0 1.100-.9 2-2 2s-2-.9-2-2 .9-2 2-2 2 .9 2 2zm-2-8c-1.100 0-2 .9-2 2s.9 2 2 2 2-.9 2-2-.9-2-2-2zm0-6c-1.100 0-2 .9-2 2s.9 2 2 2 2-.9 2-2-.9-2-2-2zm6 4c1.100 0 2-.9 2-2s-.9-2-2-2-2 .9-2 2 .9 2 2 2zm0 2c-1.100 0-2 .9-2 2s.9 2 2 2 2-.9 2-2-.9-2-2-2zm0 6c-1.100 0-2 .9-2 2s.9 2 2 2 2-.9 2-2-.9-2-2-2z"/></svg>
<div class="t" style="left:35.4px;top:15.4px;font-size:13px;font-weight:700;color:#555;letter-spacing:-1.13px;">8</div>
<div class="cb"></div>
<div class="t" style="left:116.4px;top:14.97px;font-size:13.5px;color:#1f4f9a;letter-spacing:-0.17px;text-decoration:underline">SO-9</div>
<div class="t" style="left:311.1px;top:14.97px;font-size:13.5px;color:#333;letter-spacing:0.5px;">Abigail Woods</div>
<div class="t" style="left:576.1px;top:14.97px;font-size:13.5px;color:#333;letter-spacing:0.4px;">804.00</div>
<div class="t" style="left:623.2px;top:17.09px;font-size:11px;color:#666;letter-spacing:0.19px;">USD</div>
<div class="t" style="left:692.4px;top:14.97px;font-size:13.5px;color:#e8392c;letter-spacing:0.32px;">2021-06-17</div>
<div class="cell r" style="left:804px;width:154px"></div><div class="t" style="left:838.65px;top:15.57px;font-size:13.5px;color:#fff;letter-spacing:0.48px;">Not available</div>
<div class="cell y" style="left:960px;width:155px"></div><div class="t" style="left:1008px;top:3.94px;font-size:13.3px;color:#2a2a2a;letter-spacing:0.38px;">Expected</div><div class="t" style="left:1001px;top:22.45px;font-size:14px;font-weight:700;color:#111;letter-spacing:0.05px;">2021-06-17</div>
<svg class="ic" style="left:1158.5px;top:13.5px;width:17px;height:17px;" viewBox="0 0 24 24"><path fill="#2f5fb0" d="M4 6H2v14c0 1.100.9 2 2 2h14v-2H4V6zm16-4H8c-1.100 0-2 .9-2 2v12c0 1.100.9 2 2 2h12c1.100 0 2-.9 2-2V4c0-1.100-.9-2-2-2zm-1 9h-4v4h-2v-4H9V9h4V5h2v4h4v2z"/></svg>
<div class="t" style="left:1184.4px;top:16px;font-size:13px;color:#2355a8;letter-spacing:0.28px;-webkit-text-stroke:.35px #2355a8">Make...</div>
<div class="cell n" style="left:1273px;width:154px"></div>
<div class="t" style="left:1310.4px;top:15.57px;font-size:13.5px;color:#222;letter-spacing:0.69px;">Not shipped</div>
<svg class="ic" style="left:1403px;top:11.8px;width:20px;height:20px;" viewBox="0 0 24 24"><path fill="#111" d="M7 10l5 5 5-5z"/></svg>
</div>
<div class="row" style="top:635px">
<div class="vl" style="left:78px;height:42px"></div>
<div class="vl" style="left:109px;height:42px"></div>
<div class="vl" style="left:304px;height:42px"></div>
<div class="vl" style="left:480px;height:42px"></div>
<div class="vl" style="left:654px;height:42px"></div>
<div class="vl" style="left:803px;height:42px"></div>
<div class="vl" style="left:959px;height:42px"></div>
<div class="vl" style="left:1115px;height:42px"></div>
<div class="vl" style="left:1272px;height:42px"></div>
<div class="abs" style="left:1428px;top:0;width:15px;height:42px;background:#f6f6f6"></div>
<svg class="ic" style="left:8px;top:11.5px;width:19px;height:19px;" viewBox="0 0 24 24"><path fill="#a3a3a3" d="M11 18c0 1.100-.9 2-2 2s-2-.9-2-2 .9-2 2-2 2 .9 2 2zm-2-8c-1.100 0-2 .9-2 2s.9 2 2 2 2-.9 2-2-.9-2-2-2zm0-6c-1.100 0-2 .9-2 2s.9 2 2 2 2-.9 2-2-.9-2-2-2zm6 4c1.100 0 2-.9 2-2s-.9-2-2-2-2 .9-2 2 .9 2 2 2zm0 2c-1.100 0-2 .9-2 2s.9 2 2 2 2-.9 2-2-.9-2-2-2zm0 6c-1.100 0-2 .9-2 2s.9 2 2 2 2-.9 2-2-.9-2-2-2z"/></svg>
<div class="t" style="left:35.4px;top:15.4px;font-size:13px;font-weight:700;color:#555;letter-spacing:-1.13px;">9</div>
<div class="cb"></div>
<div class="t" style="left:116.4px;top:14.97px;font-size:13.5px;color:#1f4f9a;letter-spacing:0.25px;text-decoration:underline">SO-10</div>
<div class="t" style="left:311.1px;top:14.97px;font-size:13.5px;color:#333;letter-spacing:0.41px;">Sarah Robinson</div>
<div class="t" style="left:569.2px;top:14.97px;font-size:13.5px;color:#333;letter-spacing:0.23px;">1030.00</div>
<div class="t" style="left:623.2px;top:17.09px;font-size:11px;color:#666;letter-spacing:0.19px;">USD</div>
<div class="t" style="left:692.4px;top:14.97px;font-size:13.5px;color:#e8392c;letter-spacing:0.32px;">2021-06-17</div>
<div class="cell r" style="left:804px;width:154px"></div><div class="t" style="left:838.65px;top:15.57px;font-size:13.5px;color:#fff;letter-spacing:0.48px;">Not available</div>
<div class="cell y" style="left:960px;width:155px"></div><div class="t" style="left:1008px;top:3.94px;font-size:13.3px;color:#2a2a2a;letter-spacing:0.38px;">Expected</div><div class="t" style="left:1001px;top:22.45px;font-size:14px;font-weight:700;color:#111;letter-spacing:0.05px;">2021-06-17</div>
<svg class="ic" style="left:1158.5px;top:13.5px;width:17px;height:17px;" viewBox="0 0 24 24"><path fill="#2f5fb0" d="M4 6H2v14c0 1.100.9 2 2 2h14v-2H4V6zm16-4H8c-1.100 0-2 .9-2 2v12c0 1.100.9 2 2 2h12c1.100 0 2-.9 2-2V4c0-1.100-.9-2-2-2zm-1 9h-4v4h-2v-4H9V9h4V5h2v4h4v2z"/></svg>
<div class="t" style="left:1184.4px;top:16px;font-size:13px;color:#2355a8;letter-spacing:0.28px;-webkit-text-stroke:.35px #2355a8">Make...</div>
<div class="cell n" style="left:1273px;width:154px"></div>
<div class="t" style="left:1310.4px;top:15.57px;font-size:13.5px;color:#222;letter-spacing:0.69px;">Not shipped</div>
<svg class="ic" style="left:1403px;top:11.8px;width:20px;height:20px;" viewBox="0 0 24 24"><path fill="#111" d="M7 10l5 5 5-5z"/></svg>
</div>
<div class="row" style="top:678px">
<div class="vl" style="left:78px;height:42px"></div>
<div class="vl" style="left:109px;height:42px"></div>
<div class="vl" style="left:304px;height:42px"></div>
<div class="vl" style="left:480px;height:42px"></div>
<div class="vl" style="left:654px;height:42px"></div>
<div class="vl" style="left:803px;height:42px"></div>
<div class="vl" style="left:959px;height:42px"></div>
<div class="vl" style="left:1115px;height:42px"></div>
<div class="vl" style="left:1272px;height:42px"></div>
<div class="abs" style="left:1428px;top:0;width:15px;height:42px;background:#f6f6f6"></div>
<svg class="ic" style="left:8px;top:11.5px;width:19px;height:19px;" viewBox="0 0 24 24"><path fill="#a3a3a3" d="M11 18c0 1.100-.9 2-2 2s-2-.9-2-2 .9-2 2-2 2 .9 2 2zm-2-8c-1.100 0-2 .9-2 2s.9 2 2 2 2-.9 2-2-.9-2-2-2zm0-6c-1.100 0-2 .9-2 2s.9 2 2 2 2-.9 2-2-.9-2-2-2zm6 4c1.100 0 2-.9 2-2s-.9-2-2-2-2 .9-2 2 .9 2 2 2zm0 2c-1.100 0-2 .9-2 2s.9 2 2 2 2-.9 2-2-.9-2-2-2zm0 6c-1.100 0-2 .9-2 2s.9 2 2 2 2-.9 2-2-.9-2-2-2z"/></svg>
<div class="t" style="left:35.4px;top:15.4px;font-size:13px;font-weight:700;color:#555;letter-spacing:1.54px;">10</div>
<div class="cb"></div>
<div class="t" style="left:116.4px;top:14.97px;font-size:13.5px;color:#1f4f9a;letter-spacing:0.32px;text-decoration:underline">SO-11</div>
<div class="t" style="left:311.1px;top:14.97px;font-size:13.5px;color:#333;letter-spacing:0.72px;">Tony Smith</div>
<div class="t" style="left:576.1px;top:14.97px;font-size:13.5px;color:#333;letter-spacing:0.4px;">576.00</div>
<div class="t" style="left:623.2px;top:17.09px;font-size:11px;color:#666;letter-spacing:0.19px;">USD</div>
<div class="t" style="left:692.4px;top:14.97px;font-size:13.5px;color:#e8392c;letter-spacing:0.32px;">2021-06-17</div>
<div class="cell r" style="left:804px;width:154px"></div><div class="t" style="left:838.65px;top:15.57px;font-size:13.5px;color:#fff;letter-spacing:0.48px;">Not available</div>
<div class="cell r" style="left:960px;width:155px"></div><div class="t" style="left:995.15px;top:15.57px;font-size:13.5px;color:#fff;letter-spacing:0.48px;">Not available</div>
<svg class="ic" style="left:1158.5px;top:13.5px;width:17px;height:17px;" viewBox="0 0 24 24"><path fill="#2f5fb0" d="M4 6H2v14c0 1.100.9 2 2 2h14v-2H4V6zm16-4H8c-1.100 0-2 .9-2 2v12c0 1.100.9 2 2 2h12c1.100 0 2-.9 2-2V4c0-1.100-.9-2-2-2zm-1 9h-4v4h-2v-4H9V9h4V5h2v4h4v2z"/></svg>
<div class="t" style="left:1184.4px;top:16px;font-size:13px;color:#2355a8;letter-spacing:0.28px;-webkit-text-stroke:.35px #2355a8">Make...</div>
<div class="cell n" style="left:1273px;width:154px"></div>
<div class="t" style="left:1310.4px;top:15.57px;font-size:13.5px;color:#222;letter-spacing:0.69px;">Not shipped</div>
<svg class="ic" style="left:1403px;top:11.8px;width:20px;height:20px;" viewBox="0 0 24 24"><path fill="#111" d="M7 10l5 5 5-5z"/></svg>
</div>
<div class="hl" style="left:75px;top:721px;width:1443px;height:1px"></div>
<div class="abs" style="left:1549.5px;top:366px;width:1.2px;height:129px;background:#cdd9e8"></div>
<div class="abs" style="left:1355px;top:247px;width:148px;height:132px;background:#fff;border-radius:4px;box-shadow:0 2px 8px rgba(0,0,0,.3)"></div>
<div class="abs" style="left:1355px;top:294.5px;width:148px;height:39px;background:#e9e9e9"></div>
<div class="abs" style="left:1355px;top:333.5px;width:148px;height:38.5px;background:#c9dcef"></div>
<div class="abs" style="left:1376.4px;top:268.5px;width:11.2px;height:11.2px;background:#d6d6d6"></div>
<div class="t" style="left:1408.7px;top:267.57px;font-size:13.5px;color:#333;letter-spacing:0.69px;">Not shipped</div>
<div class="abs" style="left:1376.4px;top:307.5px;width:11.2px;height:11.2px;background:#ffdb66"></div>
<div class="t" style="left:1408.7px;top:306.57px;font-size:13.5px;color:#333;letter-spacing:0.31px;">Packed</div>
<div class="abs" style="left:1376.4px;top:346.5px;width:11.2px;height:11.2px;background:#37895b"></div>
<div class="t" style="left:1408.7px;top:345.57px;font-size:13.5px;color:#333;letter-spacing:0.52px;">Delivered</div>
<div id="mag" style="position:absolute;left:876.4px;top:277.0px;width:329.2px;height:329.2px;border-radius:50%;overflow:hidden;background:#eee;box-shadow:0 2px 42px 4px rgba(0,0,0,.42)">
<div class="mc g" style="left:-20.4px;width:177.5px;top:-0.7px;height:46px"></div><div class="t" style="left:43.8px;top:16.58px;font-size:15.5px;color:#fff;letter-spacing:0.36px;">Picked</div>
<div class="mc g" style="left:159.1px;width:177px;top:-0.7px;height:46px"></div><div class="t" style="left:209.75px;top:16.58px;font-size:15.5px;color:#fff;letter-spacing:0.32px;">Processed</div>
<div class="mc g" style="left:-20.4px;width:177.5px;top:48.5px;height:46px"></div><div class="t" style="left:43.8px;top:65.78px;font-size:15.5px;color:#fff;letter-spacing:0.36px;">Picked</div>
<div class="mc g" style="left:159.1px;width:177px;top:48.5px;height:46px"></div><div class="t" style="left:209.75px;top:65.78px;font-size:15.5px;color:#fff;letter-spacing:0.32px;">Processed</div>
<div class="mc y" style="left:-20.4px;width:177.5px;top:97.7px;height:46px"></div><div class="t" style="left:34.3px;top:102.08px;font-size:15.5px;color:#2a2a2a;letter-spacing:0.38px;">Expected</div><div class="t" style="left:26.3px;top:122.96px;font-size:16px;font-weight:700;color:#111;letter-spacing:0.16px;">2021-06-03</div>
<div class="mc y" style="left:159.1px;width:177px;top:97.7px;height:46px"></div><div class="t" style="left:214px;top:102.08px;font-size:15.5px;color:#2a2a2a;letter-spacing:0.38px;">Expected</div><div class="t" style="left:206px;top:122.96px;font-size:16px;font-weight:700;color:#111;letter-spacing:0.16px;">2021-06-17</div>
<div class="mc y" style="left:-20.4px;width:177.5px;top:146.9px;height:46px"></div><div class="t" style="left:34.3px;top:151.28px;font-size:15.5px;color:#2a2a2a;letter-spacing:0.38px;">Expected</div><div class="t" style="left:26.3px;top:172.16px;font-size:16px;font-weight:700;color:#111;letter-spacing:0.16px;">2021-06-03</div>
<div class="mc y" style="left:159.1px;width:177px;top:146.9px;height:46px"></div><div class="t" style="left:214px;top:151.28px;font-size:15.5px;color:#2a2a2a;letter-spacing:0.38px;">Expected</div><div class="t" style="left:206px;top:172.16px;font-size:16px;font-weight:700;color:#111;letter-spacing:0.16px;">2021-06-17</div>
<div class="mc r" style="left:-20.4px;width:177.5px;top:196.1px;height:46px"></div><div class="t" style="left:20.3px;top:213.38px;font-size:15.5px;color:#fff;letter-spacing:0.47px;">Not available</div>
<div class="mc y" style="left:159.1px;width:177px;top:196.1px;height:46px"></div><div class="t" style="left:214px;top:200.48px;font-size:15.5px;color:#2a2a2a;letter-spacing:0.38px;">Expected</div><div class="t" style="left:206px;top:221.36px;font-size:16px;font-weight:700;color:#111;letter-spacing:0.16px;">2021-06-17</div>
<div class="mc r" style="left:-20.4px;width:177.5px;top:245.3px;height:46px"></div><div class="t" style="left:20.3px;top:262.58px;font-size:15.5px;color:#fff;letter-spacing:0.47px;">Not available</div>
<div class="mc r" style="left:159.1px;width:177px;top:245.3px;height:46px"></div><div class="t" style="left:200px;top:262.58px;font-size:15.5px;color:#fff;letter-spacing:0.47px;">Not available</div>
<div class="mc r" style="left:-20.4px;width:177.5px;top:294.5px;height:46px"></div><div class="t" style="left:20.3px;top:311.78px;font-size:15.5px;color:#fff;letter-spacing:0.47px;">Not available</div>
<div class="mc y" style="left:159.1px;width:177px;top:294.5px;height:46px"></div><div class="t" style="left:214px;top:298.88px;font-size:15.5px;color:#2a2a2a;letter-spacing:0.38px;">Expected</div><div class="t" style="left:206px;top:319.76px;font-size:16px;font-weight:700;color:#111;letter-spacing:0.16px;">2021-06-17</div>
</div>
</body></html>
